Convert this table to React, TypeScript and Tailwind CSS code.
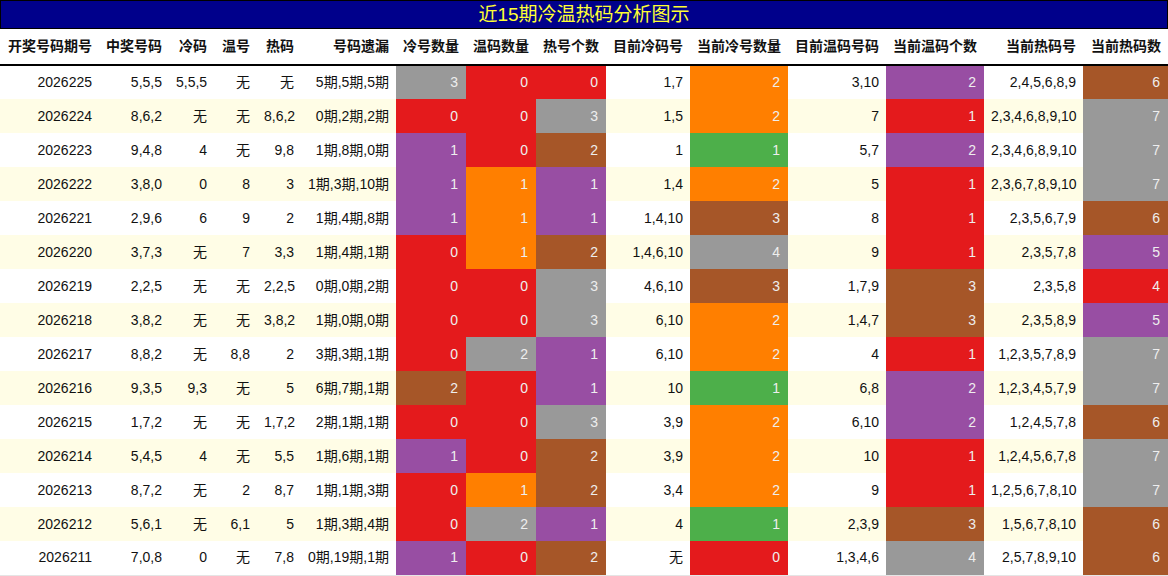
import React from 'react'

// colour keys: g gray, r red, o orange, p purple, n green, b brown
const palette: Record<string, string> = {
  g: 'bg-[#999999]',
  r: 'bg-[#e41a1c]',
  o: 'bg-[#ff7f00]',
  p: 'bg-[#984ea3]',
  n: 'bg-[#4daf4a]',
  b: 'bg-[#a65628]',
}

const columns = [
  { label: '开奖号码期号', width: 'w-[99px]' },
  { label: '中奖号码', width: 'w-[70px]' },
  { label: '冷码', width: 'w-[45px]' },
  { label: '温号', width: 'w-[43px]' },
  { label: '热码', width: 'w-[44px]' },
  { label: '号码遗漏', width: 'w-[95px]' },
  { label: '冷号数量', width: 'w-[70px]' },
  { label: '温码数量', width: 'w-[70px]' },
  { label: '热号个数', width: 'w-[70px]' },
  { label: '目前冷码号', width: 'w-[84px]' },
  { label: '当前冷号数量', width: 'w-[98px]' },
  { label: '目前温码号码', width: 'w-[98px]' },
  { label: '当前温码个数', width: 'w-[98px]' },
  { label: '当前热码号', width: 'w-[99px]' },
  { label: '当前热码数', width: 'w-[85px]' },
]

// cells with "value:colour" are coloured count cells
const rows: string[][] = [
  ['2026225', '5,5,5', '5,5,5', '无', '无', '5期,5期,5期', '3:g', '0:r', '0:r', '1,7', '2:o', '3,10', '2:p', '2,4,5,6,8,9', '6:b'],
  ['2026224', '8,6,2', '无', '无', '8,6,2', '0期,2期,2期', '0:r', '0:r', '3:g', '1,5', '2:o', '7', '1:r', '2,3,4,6,8,9,10', '7:g'],
  ['2026223', '9,4,8', '4', '无', '9,8', '1期,8期,0期', '1:p', '0:r', '2:b', '1', '1:n', '5,7', '2:p', '2,3,4,6,8,9,10', '7:g'],
  ['2026222', '3,8,0', '0', '8', '3', '1期,3期,10期', '1:p', '1:o', '1:p', '1,4', '2:o', '5', '1:r', '2,3,6,7,8,9,10', '7:g'],
  ['2026221', '2,9,6', '6', '9', '2', '1期,4期,8期', '1:p', '1:o', '1:p', '1,4,10', '3:b', '8', '1:r', '2,3,5,6,7,9', '6:b'],
  ['2026220', '3,7,3', '无', '7', '3,3', '1期,4期,1期', '0:r', '1:o', '2:b', '1,4,6,10', '4:g', '9', '1:r', '2,3,5,7,8', '5:p'],
  ['2026219', '2,2,5', '无', '无', '2,2,5', '0期,0期,2期', '0:r', '0:r', '3:g', '4,6,10', '3:b', '1,7,9', '3:b', '2,3,5,8', '4:r'],
  ['2026218', '3,8,2', '无', '无', '3,8,2', '1期,0期,0期', '0:r', '0:r', '3:g', '6,10', '2:o', '1,4,7', '3:b', '2,3,5,8,9', '5:p'],
  ['2026217', '8,8,2', '无', '8,8', '2', '3期,3期,1期', '0:r', '2:g', '1:p', '6,10', '2:o', '4', '1:r', '1,2,3,5,7,8,9', '7:g'],
  ['2026216', '9,3,5', '9,3', '无', '5', '6期,7期,1期', '2:b', '0:r', '1:p', '10', '1:n', '6,8', '2:p', '1,2,3,4,5,7,9', '7:g'],
  ['2026215', '1,7,2', '无', '无', '1,7,2', '2期,1期,1期', '0:r', '0:r', '3:g', '3,9', '2:o', '6,10', '2:p', '1,2,4,5,7,8', '6:b'],
  ['2026214', '5,4,5', '4', '无', '5,5', '1期,6期,1期', '1:p', '0:r', '2:b', '3,9', '2:o', '10', '1:r', '1,2,4,5,6,7,8', '7:g'],
  ['2026213', '8,7,2', '无', '2', '8,7', '1期,1期,3期', '0:r', '1:o', '2:b', '3,4', '2:o', '9', '1:r', '1,2,5,6,7,8,10', '7:g'],
  ['2026212', '5,6,1', '无', '6,1', '5', '1期,3期,4期', '0:r', '2:g', '1:p', '4', '1:n', '2,3,9', '3:b', '1,5,6,7,8,10', '6:b'],
  ['2026211', '7,0,8', '0', '无', '7,8', '0期,19期,1期', '1:p', '0:r', '2:b', '无', '0:r', '1,3,4,6', '4:g', '2,5,7,8,9,10', '6:b'],
]

export default function App() {
  return (
    <div className="w-[1168px] h-[576px] bg-white font-['Liberation_Sans','Noto_Sans_CJK_SC',sans-serif] text-[14px] text-[#111]">
      <div className="h-[29px] bg-[#00008b] border border-black flex items-center justify-center text-[#ffff33] text-[19px] leading-none">
        近15期冷温热码分析图示
      </div>
      <table className="table-fixed border-collapse w-[1168px]">
        <colgroup>
          {columns.map((c) => (
            <col key={c.label} className={c.width} />
          ))}
        </colgroup>
        <thead>
          <tr className="h-[36px] border-b-2 border-black">
            {columns.map((c) => (
              <th key={c.label} className="text-right font-bold px-[7px] whitespace-nowrap">
                {c.label}
              </th>
            ))}
          </tr>
        </thead>
        <tbody className="border-b border-[#e5e5e5]">
          {rows.map((row, i) => (
            <tr key={row[0]} className={i % 2 === 1 ? 'h-[34px] bg-[#fffde6]' : 'h-[34px] bg-white'}>
              {row.map((cell, j) => {
                const [value, color] = cell.split(':')
                if (color) {
                  return (
                    <td key={j} className={`text-right px-[8px] text-[#eeeeee] ${palette[color]}`}>
                      {value}
                    </td>
                  )
                }
                return (
                  <td key={j} className="text-right px-[7px] whitespace-nowrap">
                    {value}
                  </td>
                )
              })}
            </tr>
          ))}
        </tbody>
      </table>
    </div>
  )
}
